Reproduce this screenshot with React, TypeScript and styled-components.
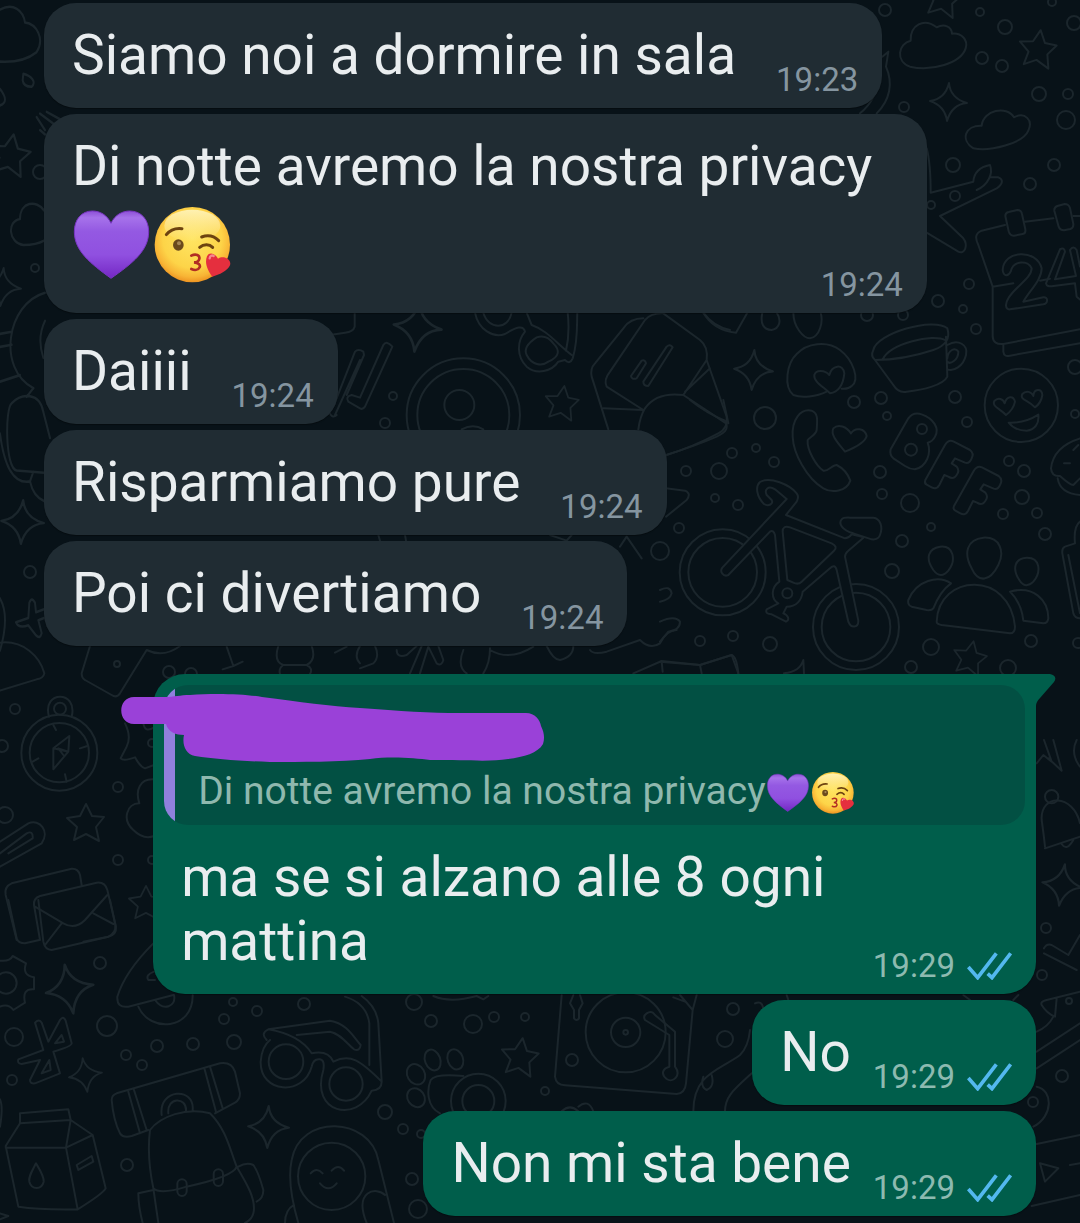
import React, { useId } from "react";
import styled, { createGlobalStyle } from "styled-components";

const GlobalStyle = createGlobalStyle`
  * { box-sizing: border-box; }
  body {
    margin: 0;
    background: #081218;
    font-family: Roboto, "Noto Sans", sans-serif;
  }
`;

const Page = styled.main`
  position: relative;
  min-height: 100vh;
  overflow: hidden;
  background: #081218;
`;

const Wallpaper = styled.svg`
  position: absolute;
  inset: 0;
  width: 100%;
  height: 100%;
  fill: none;
  stroke: #1b262c;
  stroke-width: 6;
  stroke-linecap: round;
  stroke-linejoin: round;
`;

const Thread = styled.ol`
  position: relative;
  display: flex;
  flex-direction: column;
  gap: 6px;
  margin: 0;
  padding: 3px 44px 6px;
  list-style: none;
`;

const Bubble = styled.li<{ $mine?: boolean; $tail?: boolean }>`
  position: relative;
  max-width: 89%;
  align-self: ${(p) => (p.$mine ? "flex-end" : "flex-start")};
  margin-top: ${(p) => (p.$tail ? "22px" : "0")};
  border-radius: 32px;
  border-top-right-radius: ${(p) => (p.$tail ? "0" : "32px")};
  background: ${(p) => (p.$mine ? "#005e4b" : "#202c33")};
  color: #e9edef;
  box-shadow: 0 1px 1px rgba(0, 0, 0, 0.35);
`;

const Tail = styled.svg`
  position: absolute;
  top: 0;
  left: 100%;
  width: 20px;
  height: 32px;
  fill: #005e4b;
`;

const Body = styled.div<{ $overlap?: boolean }>`
  display: grid;
  grid-template-columns: ${(p) => (p.$overlap ? "1fr" : "1fr auto")};
  align-items: end;
  padding: 20px 24px 13px 28px;
`;

const Text = styled.p`
  grid-area: 1 / 1;
  margin: 0 0 8px;
  font-size: 55px;
  line-height: 64px;
`;

const Meta = styled.div<{ $mine?: boolean; $overlap?: boolean }>`
  grid-area: ${(p) => (p.$overlap ? "1 / 1" : "1 / 2")};
  justify-self: end;
  display: flex;
  align-items: center;
  gap: 12px;
  padding-left: ${(p) => (p.$mine ? "22px" : "40px")};
  font-size: 33px;
  line-height: 30px;
  color: ${(p) => (p.$mine ? "#8dbab0" : "#8595a0")};
`;

const TickIcon = styled.svg`
  display: block;
  width: 45px;
  height: 28px;
  fill: none;
  stroke: #53b8ef;
  stroke-width: 11;
`;

const EmojiIcon = styled.svg<{ $small?: boolean }>`
  width: ${(p) => (p.$small ? "45px" : "81px")};
  height: ${(p) => (p.$small ? "42px" : "76px")};
  margin: ${(p) => (p.$small ? "7px 0 0" : "9px 0")};
  vertical-align: top;
`;

const QuoteArea = styled.div`
  position: relative;
  padding: 11px 11px 0;
`;

const Quote = styled.blockquote`
  margin: 0;
  padding: 80px 22px 8px 34px;
  border-radius: 24px;
  overflow: hidden;
  background: linear-gradient(to right, #8f80dc 11px, #025043 11px);
  color: #8fb8ae;
`;

const QuoteText = styled.p`
  margin: 0;
  font-size: 39px;
  line-height: 52px;
`;

const Scribble = styled.svg`
  position: absolute;
  top: 16px;
  left: -37px;
  width: 440px;
  height: 76px;
  fill: #9a41d8;
`;

type EmojiProps = { name: "heart" | "kiss"; small?: boolean };

function Emoji({ name, small }: EmojiProps) {
  const id = useId();
  if (name === "heart") {
    return (
      <EmojiIcon $small={small} viewBox="36 36 243 228" role="img" aria-label="cuore viola">
        <defs>
          <linearGradient id={id} x1="0" y1="0" x2="0" y2="1">
            <stop offset="0" stopColor="#8d50d6" />
            <stop offset="0.1" stopColor="#a672ea" />
            <stop offset="0.3" stopColor="#9459e2" />
            <stop offset="0.65" stopColor="#9050e0" />
            <stop offset="1" stopColor="#7427c4" />
          </linearGradient>
        </defs>
        <path
          fill={`url(#${id})`}
          stroke="#7a35c4"
          strokeWidth="3"
          d="M153 85C142 60 120 48 97 48C64 48 43 74 43 110C43 168 92 206 153 250C216 206 266 168 266 110C266 74 244 48 209 48C187 48 164 60 153 85Z"
        />
      </EmojiIcon>
    );
  }
  return (
    <EmojiIcon $small={small} viewBox="279 36 243 228" role="img" aria-label="faccina che manda un bacio">
      <defs>
        <radialGradient id={id} cx="0.5" cy="0.42" r="0.6">
          <stop offset="0" stopColor="#ffe562" />
          <stop offset="0.65" stopColor="#fdd448" />
          <stop offset="0.85" stopColor="#f8b435" />
          <stop offset="1" stopColor="#ea8a1c" />
        </radialGradient>
        <linearGradient id={`${id}-shine`} x1="0" y1="0" x2="0" y2="1">
          <stop offset="0" stopColor="#fff6c4" stopOpacity="0.85" />
          <stop offset="1" stopColor="#fff6c4" stopOpacity="0" />
        </linearGradient>
      </defs>
      <circle cx="397" cy="149" r="113" fill={`url(#${id})`} />
      <ellipse cx="397" cy="92" rx="84" ry="48" fill={`url(#${id}-shine)`} />
      <g fill="none" stroke="#6d4310" strokeWidth="9" strokeLinecap="round">
        <path d="M319 119C330 105 348 99 366 101" />
        <path d="M425 126C444 119 463 124 476 137" />
        <path d="M419 157C432 146 448 147 458 157" />
      </g>
      <ellipse cx="355" cy="150" rx="16" ry="17" fill="#6b4a1c" />
      <circle cx="357" cy="145" r="6" fill="#a58655" />
      <path
        d="M394 182C408 175 420 181 418 191C416 201 406 202 402 202C415 203 422 210 419 217C415 226 403 226 394 222"
        fill="none"
        stroke="#b22d24"
        strokeWidth="8"
        strokeLinecap="round"
      />
      <path
        fill="#e52f3e"
        d="M474 191C465 174 447 170 441 184C432 207 446 230 457 245C478 240 503 227 510 211C516 193 490 180 474 191Z"
      />
      <path d="M449 190C450 182 456 180 461 183" fill="none" stroke="#f58890" strokeWidth="7" strokeLinecap="round" />
    </EmojiIcon>
  );
}

function Ticks() {
  return (
    <TickIcon viewBox="380 58 135 84" role="img" aria-label="Letto">
      <path d="M384 103L412 135L468 62M442 123L455 135L511 62" />
    </TickIcon>
  );
}

type MessageProps = {
  time: string;
  mine?: boolean;
  overlap?: boolean;
  quote?: React.ReactNode;
  children: React.ReactNode;
};

function Message({ time, mine, overlap, quote, children }: MessageProps) {
  return (
    <Bubble $mine={mine} $tail={Boolean(quote)}>
      {quote && (
        <Tail viewBox="0 0 20 32" aria-hidden="true">
          <path d="M-1 0H14Q22 2 18 8L4 24Q0 28 0 32H-1Z" />
        </Tail>
      )}
      {quote}
      <Body $overlap={overlap}>
        <Text>{children}</Text>
        <Meta $mine={mine} $overlap={overlap}>
          <time>{time}</time>
          {mine && <Ticks />}
        </Meta>
      </Body>
    </Bubble>
  );
}

function HiddenNameQuote() {
  return (
    <QuoteArea>
      <Quote>
        <QuoteText>
          Di notte avremo la nostra privacy
          <Emoji name="heart" small />
          <Emoji name="kiss" small />
        </QuoteText>
      </Quote>
      <Scribble viewBox="116 690 440 76" aria-hidden="true">
        <path d="M134 697H165C174 697 180 695 190 695C215 693 245 694 262 697C300 702 330 706 360 708C400 711 430 713 460 713H526C535 713 540 720 541 726C544 732 545 738 543 744C538 753 524 757 508 759C490 762 470 760 430 760C415 758 390 756 370 759C340 762 300 762 270 762C240 761 215 759 195 756C185 754 182 744 184 735C176 735 168 732 166 724H134C117 724 117 697 134 697Z" />
      </Scribble>
    </QuoteArea>
  );
}

/* x, y, radius of the small rings scattered over the wallpaper */
const rings: number[][] = [
  [885, 10, 6], [980, 12, 4], [1005, 27, 7], [1052, 2, 4], [1074, 23, 7], [982, 58, 6], [1002, 66, 6],
  [1039, 94, 7], [1068, 94, 5], [904, 107, 5], [1066, 120, 9], [953, 165, 7], [1054, 165, 6], [1030, 184, 6],
  [955, 196, 5], [931, 205, 4], [969, 284, 5], [938, 301, 6], [963, 309, 4], [976, 329, 5], [903, 315, 5],
  [867, 315, 6], [854, 402, 6], [881, 398, 6], [887, 416, 4], [955, 397, 6], [967, 422, 5], [765, 418, 11],
  [1075, 367, 7], [1075, 414, 4], [732, 453, 5], [756, 448, 4], [774, 462, 5], [686, 471, 5], [719, 471, 8],
  [715, 498, 4], [738, 505, 5], [679, 528, 5], [660, 551, 9], [880, 472, 6], [882, 494, 5], [910, 503, 9],
  [931, 527, 4], [902, 541, 6], [892, 571, 7], [1009, 461, 5], [1024, 471, 6], [1022, 497, 7], [1003, 514, 5],
  [1037, 513, 5], [1045, 534, 6], [700, 641, 5], [733, 636, 5], [770, 644, 7], [931, 647, 8], [911, 667, 6],
  [1031, 641, 6], [1008, 668, 8], [1078, 643, 5], [393, 396, 4], [385, 423, 5], [35, 268, 4], [30, 572, 6],
  [40, 172, 7], [15, 709, 5], [117, 664, 3], [169, 672, 6], [191, 674, 6], [2, 746, 6], [118, 787, 5],
  [5, 815, 8], [152, 743, 4], [118, 860, 5], [152, 860, 4], [100, 963, 6], [14, 1037, 9], [107, 1026, 10],
  [12, 1080, 5], [126, 1055, 5], [142, 1065, 5], [157, 1046, 6], [193, 1044, 6], [224, 1019, 5],
  [233, 1002, 4], [257, 1011, 5], [234, 1042, 7], [304, 1004, 6], [127, 1165, 6], [385, 1112, 7],
  [403, 1129, 5], [412, 1179, 6], [418, 1209, 9], [414, 1002, 8], [431, 1021, 6], [473, 1024, 9],
  [494, 1017, 5], [525, 1017, 4], [545, 1091, 4], [572, 1060, 6], [733, 1009, 6], [725, 1039, 8],
  [1046, 928, 5], [1042, 975, 5], [1069, 1001, 3], [1062, 1076, 6], [1033, 1102, 5], [421, 1134, 4],
];

/* x, y, scale, rotation */
const stars: number[][] = [
  [1038, 49, 1, 8], [562, 403, 0.9, 8], [970, 658, 0.9, 12], [86, 823, 1, 0], [520, 1057, 1, 8],
  [146, 903, 0.9, 0], [10, 155, 1.1, 10], [943, -2, 1, 10],
];
const sparkles: number[][] = [
  [948, 102, 1, 3], [753, 370, 1.05, 4], [417, 327, 1.3, 6], [22, 522, 1.15, 3], [69, 989, 1.3, -10],
  [85, 1075, 0.9, -8], [268, 1127, 1.1, 2], [1062, 885, 1.1, 8], [2, 287, 1, 5],
];

function Doodles() {
  return (
    <Wallpaper viewBox="0 0 1080 1223" preserveAspectRatio="xMinYMin slice" aria-hidden="true">
      <g strokeWidth="2">
        {rings.map(([x, y, r], i) => (
          <circle key={i} cx={x} cy={y} r={r} />
        ))}
        {stars.map(([x, y, s, a], i) => (
          <path
            key={i}
            transform={`translate(${x} ${y}) rotate(${a}) scale(${s})`}
            d="M0-19L6-7L18-6L10 4L13 18L0 11L-12 17L-9 4L-19-5L-6-7Z"
          />
        ))}
        {sparkles.map(([x, y, s, a], i) => (
          <path
            key={i}
            transform={`translate(${x} ${y}) rotate(${a}) scale(${s})`}
            d="M0-19Q2-4 19 0Q4 2 0 19Q-3 4-18 0Q-3-3 0-19Z"
          />
        ))}
      </g>

      {/* clouds, plane, calendar, cup, helmet, in love face */}
      <g transform="translate(660 0) scale(.33333)">
        <path d="M752 122C750 75 792 52 830 82C853 70 875 80 876 101C905 98 925 120 917 145C902 190 815 215 750 200C705 184 715 130 752 122Z" />
        <path d="M965 377C970 330 1040 315 1062 352C1095 335 1120 360 1105 392C1090 430 990 455 940 445C900 420 915 375 965 377Z" />
        <path d="M667 170L685 155L678 200C700 250 690 300 650 340M600 340Q650 300 662 220" />
        <path d="M800 445Q812 490 812 578L940 545C942 515 965 500 990 495C1000 520 985 555 950 570M990 532L1015 532C1030 538 1030 552 1010 565L840 648L910 715C925 735 915 765 895 755L800 698" />
        <path d="M1035 675L965 692C945 700 945 715 955 735L998 860L998 1010Q1000 1035 1030 1032L1260 988M998 860L1060 850M1140 842L1170 836M1030 1035V1055Q1032 1072 1050 1067L1260 1030M1095 665L1180 655M1240 648H1260" />
        <path d="M1036 648Q1036 638 1046 636L1072 630Q1084 630 1086 642L1096 688Q1098 700 1088 702L1062 707Q1050 708 1046 694ZM1183 632Q1182 622 1192 618L1214 612Q1226 612 1230 624L1240 672Q1241 684 1231 687L1212 691Q1200 691 1196 680Z" />
        <path d="M1028 810C1030 750 1130 745 1145 805C1145 840 1110 870 1090 905L1150 892C1165 890 1165 910 1150 913L1050 928C1035 930 1035 910 1045 895C1065 860 1115 835 1115 805C1105 780 1060 780 1052 815C1045 830 1030 830 1028 810Z" />
        <path d="M1200 748Q1212 740 1215 755L1185 838L1248 828L1230 750Q1240 735 1250 750L1260 800M1200 748L1158 850Q1160 862 1180 858L1245 850L1250 890L1262 900" />
        <path d="M640 1050C650 1000 820 950 862 985C870 1010 862 1035 820 1050C760 1070 700 1080 645 1080C635 1072 635 1060 640 1050ZM668 1078C690 1030 820 1000 855 1020M645 1080L700 1155Q715 1180 740 1175C790 1170 850 1155 862 1130L858 1010M862 1035C895 1015 925 1035 918 1065C910 1100 880 1115 862 1108M862 1075C865 1050 885 1040 895 1055C895 1080 870 1095 862 1085" />
        <path d="M400 1185C370 1160 380 1090 410 1062C440 1030 500 1020 540 1050C580 1080 600 1140 575 1158Q565 1168 545 1166M400 1185C425 1195 470 1190 500 1175M510 1180C490 1160 460 1145 463 1125C468 1108 495 1110 508 1125C515 1095 550 1090 553 1120C550 1150 540 1175 510 1180Z" />
        <path d="M130 938Q160 990 228 998L262 938M307 938C300 970 310 990 335 990C360 985 365 960 350 938M400 938C400 980 430 1015 450 1015C480 1010 490 965 482 938" />
        <circle cx="1084" cy="1216" r="110" />
        <path d="M1038 1245C1020 1225 995 1220 1003 1203C1015 1190 1030 1198 1034 1210C1040 1188 1060 1185 1065 1205C1062 1220 1052 1235 1038 1245ZM1125 1222C1105 1200 1078 1200 1087 1182C1098 1170 1115 1175 1120 1188C1122 1165 1145 1165 1147 1185C1145 1200 1135 1215 1125 1222ZM1046 1268Q1095 1270 1135 1244C1138 1270 1125 1290 1100 1292Q1065 1292 1046 1268Z" />
      </g>

      {/* phone, BFF, bicycle, group, cupcake */}
      <g transform="translate(660 400) scale(.33333)">
        <path d="M398 110C395 60 420 25 455 32C475 40 472 60 470 90C468 105 450 110 443 120C440 150 470 200 490 212C505 215 515 195 530 195C550 205 565 225 571 242C560 275 515 280 490 265C440 235 400 160 398 110Z" />
        <path d="M555 155C535 130 510 105 520 85C535 70 560 80 573 100C585 80 615 85 620 108C615 130 580 145 555 155Z" />
        <path d="M692 148L745 55Q760 35 785 43C820 55 840 85 825 110Q818 125 803 128C815 160 800 200 765 208Q750 208 735 198L700 175Q688 165 692 148Z" />
        <circle cx="786" cy="87" r="15" />
        <circle cx="753" cy="149" r="18" />
        <path
          id="letter-f"
          d="M796 240L855 135Q865 118 880 124L930 150Q943 160 935 175Q928 192 915 188L885 175L875 190L890 200Q900 212 890 225Q880 240 865 230L853 225L838 255Q830 270 815 262L800 254Q792 250 796 240Z"
        />
        <use href="#letter-f" x="86" y="78" />
        <circle cx="188" cy="517" r="129" />
        <circle cx="188" cy="517" r="103" />
        <circle cx="588" cy="681" r="129" />
        <circle cx="588" cy="681" r="103" />
        <path
          fill="#081218"
          d="M187 503L380 297L345 268C325 255 312 268 320 285L335 300C342 312 325 320 312 312C290 290 285 260 300 246C330 228 390 255 410 280Q418 290 410 305L378 345L555 415Q565 415 575 403L612 412L565 452Q555 460 555 470L595 662C595 685 572 685 565 665L530 510Q525 490 510 505L428 575C425 600 410 620 380 620L370 640C385 645 390 660 378 665L335 643C325 642 315 640 320 628L355 610C330 595 335 560 358 545L345 405Q340 388 330 395L205 525C190 532 178 515 187 503Z"
        />
        <path d="M368 395Q368 375 390 382L515 430Q535 440 522 452L425 545Q415 555 400 548L382 540Z" />
        <path
          fill="#081218"
          d="M545 358Q550 352 570 353H640C660 355 670 380 660 405Q655 420 635 418L580 400C545 390 535 370 545 358Z"
        />
        <circle cx="382" cy="580" r="15" />
        <path d="M840 440C880 435 890 480 865 512C850 530 835 530 820 510C795 475 805 445 840 440ZM970 413C1020 410 1035 455 1015 495C990 545 955 550 935 505C910 460 920 418 970 413ZM1100 473C1140 472 1145 515 1120 545C1105 560 1090 560 1078 540C1055 505 1065 475 1100 473Z" />
        <path d="M745 600C770 540 835 525 873 550C845 570 830 600 820 625Q815 632 800 630L755 620Q742 615 745 600ZM830 665C835 520 1050 510 1065 680Q1065 700 1050 700L845 675Q830 672 830 665ZM1050 575C1120 555 1165 600 1165 655Q1163 670 1150 670L1090 662Q1085 610 1050 575Z" />
        <path d="M90 0Q140 40 195 62C210 90 190 100 170 110Q100 140 18 165M190 0L205 70M18 265L75 272Q95 280 80 300L18 350" />
        <path d="M1260 115Q1180 140 1173 205Q1175 230 1200 228Q1230 255 1240 255L1260 235M1193 235Q1200 280 1260 285M1240 150L1255 135M1212 190H1230" />
        <path d="M1260 365Q1240 380 1245 430L1215 440Q1205 445 1207 460L1240 640Q1245 655 1260 655M1225 465L1260 640" />
        <path d="M0 570Q30 555 35 580Q30 600 0 605M0 665Q45 645 60 665Q60 690 25 695L0 725M0 785L120 795L215 765L235 820M120 795L125 820M372 820Q420 815 430 780L432 820M5 785L8 815" />
      </g>

      {/* pencils, record, glasses, open letter */}
      <g transform="translate(330 300) scale(.33333)">
        <path d="M20 345C10 355 0 345 0 340M10 320L75 155Q85 145 100 155L102 165L50 285M15 345L90 180M160 135Q170 120 187 140L105 320Q98 330 90 325L55 305Q45 290 65 285L90 293Z" />
        <path d="M74 38V80Q70 95 45 98L0 105" />
        <circle cx="400" cy="345" r="170" />
        <circle cx="400" cy="345" r="138" />
        <circle cx="388" cy="315" r="45" />
        <path d="M395 388Q430 370 460 388" />
        <path d="M435 38C445 90 490 115 525 102C560 80 580 75 585 95C560 125 560 170 590 200C620 225 665 215 685 185L705 180Q720 195 728 175C745 120 740 70 742 38M460 38C475 90 535 90 545 38M590 38L605 75C650 90 680 130 725 165M713 38Q720 100 708 152" />
        <path d="M620 112C600 125 580 145 590 165C605 195 635 200 655 185C690 170 690 150 670 130C655 110 640 105 620 112Z" />
        <path d="M940 55Q900 55 880 85L795 190Q780 205 785 230L835 388M820 325L940 330L830 260Q820 240 840 215L945 60Q965 38 1000 40L1110 120Q1135 140 1130 180L1060 285Q980 275 945 325Q930 350 925 388M1060 285L1185 368M1130 180L1190 350Q1195 385 1165 400Q1090 440 1010 465M1065 275L1140 205" />
        <path d="M1010 140L940 245Q940 258 955 258L1028 142Q1020 130 1010 140ZM935 182L903 228Q905 240 920 235L948 190Q945 178 935 182Z" />
        <path d="M1120 38Q1150 80 1200 90M145 705L150 722M225 705L228 722M660 705L710 722L725 705M870 740L890 710L935 775" />
      </g>

      {/* cloud, sun and plant on the left edge */}
      <g transform="scale(.33333 .43367)">
        <path d="M0 22C40 5 70 25 75 52C110 55 135 90 110 120Q70 145 0 142M0 205Q30 235 0 243M70 170C95 175 110 190 95 200Q70 200 68 185ZM110 270L135 300M120 262L160 285M140 258L180 275M120 300L135 310M60 505C60 465 110 460 132 485M60 505C20 510 25 560 70 565Q110 565 132 555" />
        <path d="M135 675C20 700 -10 850 100 895M135 740Q110 780 130 825M0 770L35 765M0 800L35 795M0 880L60 865" />
        <path d="M50 1085C15 1080 15 940 35 930C65 905 120 905 130 950L150 1010M50 1085L132 1090M0 1000Q20 1120 90 1110L100 1088M90 1110Q100 1145 132 1155M80 915L100 895" />
        <path d="M48 1435L85 1425L88 1390Q95 1375 105 1390L108 1412L132 1405M48 1435Q55 1450 85 1442L108 1465Q120 1475 125 1460L115 1430L132 1425M0 1380Q30 1420 0 1500" />
      </g>

      {/* compass, ghost, paper clip, envelopes */}
      <g transform="translate(0 640) scale(.33333)">
        <path d="M0 8C70 0 120 50 133 100Q130 115 110 118L0 152M270 18L245 100Q245 115 255 120L335 165Q350 175 360 160L440 30Q490 55 540 18M680 20L700 78L728 65M700 78L668 88M835 18Q820 65 850 75H920Q950 60 935 18M850 75Q835 85 840 102M920 75Q940 85 930 102M1005 38L1040 20M1080 70Q1060 50 1080 18" />
        <circle cx="178" cy="338" r="114" />
        <circle cx="178" cy="338" r="89" />
        <path d="M147 230C125 150 235 150 215 230M208 288L160 325V388L205 335ZM160 325L205 335L175 325L190 345M160 255L168 270M240 325L262 318M98 365L115 355M195 403L200 425" />
        <circle cx="180" cy="206" r="18" />
        <path d="M375 250Q395 290 380 320L362 355Q370 365 405 352Q420 380 435 385L462 375M430 250Q435 280 462 262M462 418C420 415 405 450 418 490C380 490 365 540 400 570Q430 600 462 588" />
        <path d="M0 605L85 550C120 535 150 575 125 610L0 680M0 640L80 580Q100 570 98 595L25 640" />
        <path d="M50 900L17 765Q12 740 35 730L215 686Q235 685 240 705L245 735M120 900L102 795Q100 775 120 768L290 728Q315 725 322 750L348 860Q350 885 325 890L250 905M105 800L190 850Q225 870 255 840L322 765M185 850L135 915M280 820L340 852" />
      </g>

      {/* gear, satellite, milk, camera backpack, sunglasses, astronaut */}
      <g transform="translate(0 900) scale(.33333)">
        <path d="M25 0L50 115Q55 130 75 130L118 120M115 0L130 125Q135 150 155 150L325 110Q348 100 346 75L330 0" />
        <circle cx="18" cy="249" r="32" />
        <path d="M0 182Q30 185 38 168L78 190Q65 225 102 232V268Q65 265 75 308L40 330Q25 310 0 320" />
        <path d="M460 130C420 170 370 230 352 290Q350 325 385 320L520 285M415 320C450 400 580 390 578 285M462 215Q435 225 445 240L465 240M465 300C490 335 530 320 522 285" />
        <path d="M105 368Q118 355 125 368L145 425L180 360Q190 345 197 362L215 430Q215 440 160 455L180 520L105 550Q90 552 90 540L120 480L65 492Q50 490 55 478L130 450ZM165 430L185 405L192 425ZM125 520L148 480L152 510Z" />
        <path d="M60 640L205 628L212 660L60 670ZM60 670L17 738L55 920Q120 930 233 928L198 743H17M198 743L212 660L278 705L317 865Q310 880 233 928M198 743L278 705M108 790C95 815 85 830 88 845C95 870 125 870 131 845C133 830 120 810 108 790ZM230 795L275 768L280 785L235 810Z" />
        <path d="M335 600Q335 585 350 580L660 490Q695 485 705 515L720 580Q720 600 705 608L645 640M335 600Q340 660 360 700Q370 715 395 708L445 690M385 575L420 700M402 570L440 690M613 505L648 635M630 500L668 625" />
        <path d="M460 865Q440 770 450 690C480 650 560 620 630 640C680 690 690 750 710 800Q700 830 560 860Q480 885 460 865ZM485 645C475 565 585 560 578 630M505 640C500 590 560 590 558 632M460 865L475 969M415 880L460 870M415 880Q415 920 428 969M710 800C740 850 770 900 760 940Q755 960 735 969M715 800Q740 785 760 795Q775 815 790 870Q790 895 770 905" />
        <rect x="532" y="838" width="28" height="50" rx="14" />
        <rect x="641" y="808" width="28" height="50" rx="14" />
        <circle cx="858" cy="485" r="52" />
        <circle cx="1038" cy="552" r="50" />
        <path d="M800 420Q780 400 805 388L990 362C1040 370 1060 410 1082 435Q1080 455 1062 448C1040 430 1020 400 990 395L890 405M805 388Q900 405 935 460Q985 450 1000 485C1050 460 1080 480 1145 545Q1145 570 1115 572C1070 670 930 640 970 510Q975 480 960 478Q940 475 935 500C910 590 780 580 782 485Q785 440 810 420M1035 290Q1100 310 1108 370V495M1085 288Q1130 320 1135 370L1145 545" />
        <circle cx="995" cy="829" r="101" />
        <path d="M895 969Q860 850 875 780C900 640 1110 650 1135 780L1182 969M1100 969C1060 870 1130 860 1155 885M855 969Q855 930 882 915M932 820Q950 800 968 820M995 812Q1015 790 1032 812M960 850Q985 880 1010 850M0 598Q10 620 0 680M0 940L25 948L0 958" />
      </g>

      {/* paw, turntable, guitar */}
      <g transform="translate(400 980) scale(.33333)">
        <ellipse cx="48" cy="283" rx="26" ry="32" transform="rotate(-30 48 283)" />
        <ellipse cx="48" cy="353" rx="25" ry="30" transform="rotate(-35 48 353)" />
        <ellipse cx="98" cy="240" rx="23" ry="32" transform="rotate(-20 98 240)" />
        <ellipse cx="166" cy="238" rx="23" ry="31" transform="rotate(-20 166 238)" />
        <path d="M120 400C80 380 80 330 92 300Q105 280 190 288M100 48Q150 70 230 48L250 58L265 48M485 45L465 290Q468 315 495 316L830 342Q855 340 858 310L878 90M840 45L878 90L890 45M820 52L855 65" />
        <circle cx="235" cy="363" r="82" />
        <circle cx="235" cy="363" r="48" />
        <circle cx="677" cy="157" r="120" />
        <circle cx="677" cy="157" r="44" />
        <circle cx="677" cy="157" r="7" />
        <path d="M520 45L510 70L522 90V115Q530 125 537 115V90L548 70L540 45M740 100Q755 90 765 105L825 155V260C845 285 820 310 800 297C780 280 790 265 808 260V165L735 120Q728 108 740 100Z" />
        <path d="M880 394C880 280 960 270 1020 225Q1045 200 1050 150M975 394C975 350 1000 330 1055 280M910 290Q900 320 920 330Q945 320 935 285M485 394Q510 370 535 394M535 380Q565 355 580 394M1065 70Q1085 60 1090 85" />
      </g>

      {/* shapes running down the right edge */}
      <g transform="translate(740 740) scale(.33333)">
        <path d="M890 70L910 45L935 65L912 0M940 0L965 92L925 55M1010 0Q990 40 1020 80M915 320Q912 290 905 240C900 160 1000 160 1020 250M915 325L1020 290M965 312Q980 335 1000 300" />
        <circle cx="935" cy="170" r="20" />
        <path d="M912 625Q920 610 935 615L985 645L1020 585M912 640L1010 690M905 795Q900 785 920 780L1020 755M905 795Q920 820 945 830L950 775M140 765L145 780M670 765L690 780M820 780L835 765" />
      </g>
      <g transform="translate(840 930) scale(.33333)">
        <path d="M640 260Q625 290 590 305M590 365L720 280M590 415L720 330M590 470C640 480 640 560 580 590M590 642L720 615M600 700L655 715L615 755ZM690 705L720 700M575 828L720 795" />
      </g>
      <g transform="translate(360 630) scale(.33333)">
        <path d="M45 48Q60 80 40 100L0 115M110 60Q110 85 140 75L170 48M150 130L185 48M180 130L205 50L230 100Q245 110 250 90L235 48M310 60Q290 110 320 130M390 55Q390 100 370 130M390 60Q450 95 520 50M560 48Q580 90 600 90Q640 80 640 48M690 60Q700 75 740 65L840 30Q870 60 900 40Q920 0 950 0M820 130L905 93L1020 105L1115 75Q1130 80 1135 130" />
      </g>
    </Wallpaper>
  );
}

export default function App() {
  return (
    <>
      <GlobalStyle />
      <Page>
        <Doodles />
        <Thread>
          <Message time="19:23">Siamo noi a dormire in sala</Message>
          <Message time="19:24" overlap>
            Di notte avremo la nostra privacy <Emoji name="heart" />
            <Emoji name="kiss" />
          </Message>
          <Message time="19:24">Daiiii</Message>
          <Message time="19:24">Risparmiamo pure</Message>
          <Message time="19:24">Poi ci divertiamo</Message>
          <Message time="19:29" mine quote={<HiddenNameQuote />}>
            ma se si alzano alle 8 ogni mattina
          </Message>
          <Message time="19:29" mine>No</Message>
          <Message time="19:29" mine>Non mi sta bene</Message>
        </Thread>
      </Page>
    </>
  );
}
